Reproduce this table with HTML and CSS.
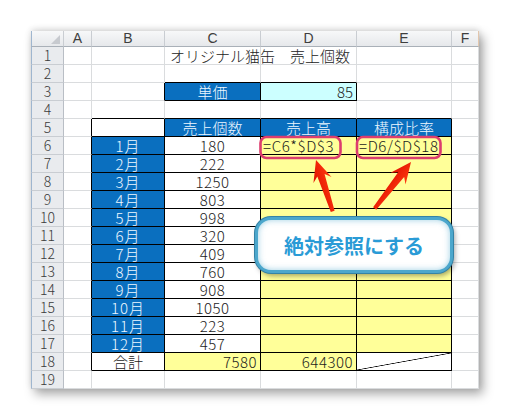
FILE: index.html
```html
<!DOCTYPE html>
<html lang="ja">
<head>
<meta charset="utf-8">
<title>絶対参照</title>
<link rel="stylesheet" href="styles.css">
</head>
<body>
<div class="page">
  <div class="sheet">
    <div class="ch corner"><span class="tri"></span></div><div class="ch">A</div><div class="ch">B</div><div class="ch">C</div><div class="ch">D</div><div class="ch">E</div><div class="ch chf">F</div>

    <div class="rh">1</div><div class="c"></div><div class="c"></div><div class="c lt title">オリジナル猫缶　売上個数</div><div class="c"></div><div class="c"></div><div class="c"></div>

    <div class="rh">2</div><div class="c"></div><div class="c"></div><div class="c kb"></div><div class="c kb"></div><div class="c"></div><div class="c"></div>

    <div class="rh">3</div><div class="c"></div><div class="c kr"></div><div class="c kr kb blue ctr">単価</div><div class="c kr kb cyan rt">85</div><div class="c"></div><div class="c"></div>

    <div class="rh">4</div><div class="c"></div><div class="c kb"></div><div class="c kb"></div><div class="c kb"></div><div class="c kb"></div><div class="c"></div>

    <div class="rh">5</div><div class="c kr"></div><div class="c kr kb"></div><div class="c kr kb blue ctr">売上個数</div><div class="c kr kb blue ctr">売上高</div><div class="c kr kb blue ctr">構成比率</div><div class="c"></div>

    <div class="rh">6</div><div class="c kr"></div><div class="c kr kb blue ctr m">1月</div><div class="c kr kb ctr n">180</div><div class="c kr kb yel lt f">=C6*$D$3</div><div class="c kr kb yel lt f">=D6/$D$18</div><div class="c"></div>

    <div class="rh">7</div><div class="c kr"></div><div class="c kr kb blue ctr m">2月</div><div class="c kr kb ctr n">222</div><div class="c kr kb yel"></div><div class="c kr kb yel"></div><div class="c"></div>

    <div class="rh">8</div><div class="c kr"></div><div class="c kr kb blue ctr m">3月</div><div class="c kr kb ctr n">1250</div><div class="c kr kb yel"></div><div class="c kr kb yel"></div><div class="c"></div>

    <div class="rh">9</div><div class="c kr"></div><div class="c kr kb blue ctr m">4月</div><div class="c kr kb ctr n">803</div><div class="c kr kb yel"></div><div class="c kr kb yel"></div><div class="c"></div>

    <div class="rh">10</div><div class="c kr"></div><div class="c kr kb blue ctr m">5月</div><div class="c kr kb ctr n">998</div><div class="c kr kb yel"></div><div class="c kr kb yel"></div><div class="c"></div>

    <div class="rh">11</div><div class="c kr"></div><div class="c kr kb blue ctr m">6月</div><div class="c kr kb ctr n">320</div><div class="c kr kb yel"></div><div class="c kr kb yel"></div><div class="c"></div>

    <div class="rh">12</div><div class="c kr"></div><div class="c kr kb blue ctr m">7月</div><div class="c kr kb ctr n">409</div><div class="c kr kb yel"></div><div class="c kr kb yel"></div><div class="c"></div>

    <div class="rh">13</div><div class="c kr"></div><div class="c kr kb blue ctr m">8月</div><div class="c kr kb ctr n">760</div><div class="c kr kb yel"></div><div class="c kr kb yel"></div><div class="c"></div>

    <div class="rh">14</div><div class="c kr"></div><div class="c kr kb blue ctr m">9月</div><div class="c kr kb ctr n">908</div><div class="c kr kb yel"></div><div class="c kr kb yel"></div><div class="c"></div>

    <div class="rh">15</div><div class="c kr"></div><div class="c kr kb blue ctr m">10月</div><div class="c kr kb ctr n">1050</div><div class="c kr kb yel"></div><div class="c kr kb yel"></div><div class="c"></div>

    <div class="rh">16</div><div class="c kr"></div><div class="c kr kb blue ctr m">11月</div><div class="c kr kb ctr n">223</div><div class="c kr kb yel"></div><div class="c kr kb yel"></div><div class="c"></div>

    <div class="rh">17</div><div class="c kr"></div><div class="c kr kb blue ctr m">12月</div><div class="c kr kb ctr n">457</div><div class="c kr kb yel"></div><div class="c kr kb yel"></div><div class="c"></div>

    <div class="rh">18</div><div class="c kr"></div><div class="c kr kb ctr">合計</div><div class="c kr kb yel rt n">7580</div><div class="c kr kb yel rt n">644300</div><div class="c kr kb diag"></div><div class="c"></div>

    <div class="rh">19</div><div class="c"></div><div class="c"></div><div class="c"></div><div class="c"></div><div class="c"></div><div class="c"></div>
  </div>

  <svg class="marks" width="510" height="420" viewBox="0 0 510 420">
    <defs>
      <linearGradient id="red" x1="0" y1="0" x2="0" y2="1">
        <stop offset="0" stop-color="#ff3a10"/>
        <stop offset="1" stop-color="#e01000"/>
      </linearGradient>
    </defs>
    <rect x="260.5" y="137" width="80" height="21" rx="6" ry="6" fill="none" stroke="#dc3d6e" stroke-width="2.6"/>
    <rect x="357" y="137" width="83.5" height="21" rx="6" ry="6" fill="none" stroke="#dc3d6e" stroke-width="2.6"/>
    <g transform="translate(316,160) rotate(72)">
      <polygon points="0,0 21,9.5 16,3.8 54,2 54,-2 16,-3.8 21,-9.5" fill="url(#red)"/>
    </g>
    <g transform="translate(411,162) rotate(128)">
      <polygon points="0,0 21,9.5 16,3.8 59,2 59,-2 16,-3.8 21,-9.5" fill="url(#red)"/>
    </g>
  </svg>

  <div class="callout">絶対参照にする</div>
</div>
</body>
</html>
```

FILE: styles.css
```css
html, body {
  margin: 0;
  padding: 0;
  background: #ffffff;
}

.page {
  position: relative;
  width: 510px;
  height: 420px;
  overflow: hidden;
  padding-top: 31px;
  box-sizing: border-box;
}

.sheet {
  display: grid;
  grid-template-columns: 33px 28px 73px 96px 96px 95px 27px;
  grid-template-rows: 16px repeat(19, 18px);
  width: 448px;
  margin-left: 31px;
  background: #ffffff;
  box-shadow: 4px 5px 10px rgba(0, 0, 0, 0.35), 0 -2px 6px rgba(0, 0, 0, 0.12);
  font-family: "Noto Sans CJK JP", "Liberation Sans", sans-serif;
  font-weight: 300;
  color: #1c1c1c;
}

.sheet > div {
  box-sizing: border-box;
  min-width: 0;
}

.ch {
  background: linear-gradient(#f7f8f9, #e6e8eb);
  border-right: 1px solid #c9cdd2;
  border-bottom: 1px solid #a9b0b8;
  font-family: "Liberation Sans", sans-serif;
  font-weight: 400;
  font-size: 14px;
  line-height: 15px;
  color: #3e3e3e;
  text-align: center;
}

.chf {
  border-right: 1px solid #e2c6ad;
}

.corner {
  position: relative;
  border-left: 1px solid #9fb6cf;
}

.tri {
  position: absolute;
  right: 3px;
  bottom: 2px;
  width: 0;
  height: 0;
  border-left: 9px solid transparent;
  border-bottom: 9px solid #c7cacf;
}

.rh {
  background: #e9ebee;
  border-left: 1px solid #9fb6cf;
  border-right: 1px solid #b9bec5;
  border-bottom: 1px solid #c9cdd2;
  font-size: 14px;
  line-height: 17px;
  color: #3a3a3a;
  text-align: center;
}

.c {
  border-right: 1px solid #dadcde;
  border-bottom: 1px solid #dadcde;
  font-size: 15px;
  line-height: 17px;
  padding: 0 3px;
  white-space: nowrap;
  overflow: visible;
}

.kr { border-right-color: #000000; }
.kb { border-bottom-color: #000000; }

.ctr { text-align: center; }
.rt { text-align: right; }
.lt { text-align: left; }

.title {
  padding-left: 5px;
  color: #222222;
}

.m {
  letter-spacing: 1px;
}

.n {
  letter-spacing: 0.5px;
}

.blue {
  background: #0a6fbf;
  color: #eef8ff;
}

.yel { background: #ffff99; }
.cyan { background: #ccffff; }

.f {
  padding-left: 2px;
  letter-spacing: 0.6px;
}

.diag {
  background: linear-gradient(to bottom right, transparent calc(50% - 0.7px), #000 50%, transparent calc(50% + 0.7px));
}

.marks {
  position: absolute;
  left: 0;
  top: 0;
  pointer-events: none;
}

.callout {
  position: absolute;
  left: 255px;
  top: 217px;
  width: 198px;
  height: 56px;
  box-sizing: border-box;
  display: flex;
  align-items: center;
  justify-content: center;
  background: #ffffff;
  border: 3px solid #4ca7cc;
  border-radius: 16px;
  box-shadow: 0 0 0 1px #3583a6, 2px 3px 5px rgba(0, 0, 0, 0.35), inset 0 0 6px rgba(76, 167, 204, 0.55);
  font-family: "Noto Sans CJK JP", sans-serif;
  font-weight: 700;
  font-size: 20px;
  color: #2a9bd6;
}
```
